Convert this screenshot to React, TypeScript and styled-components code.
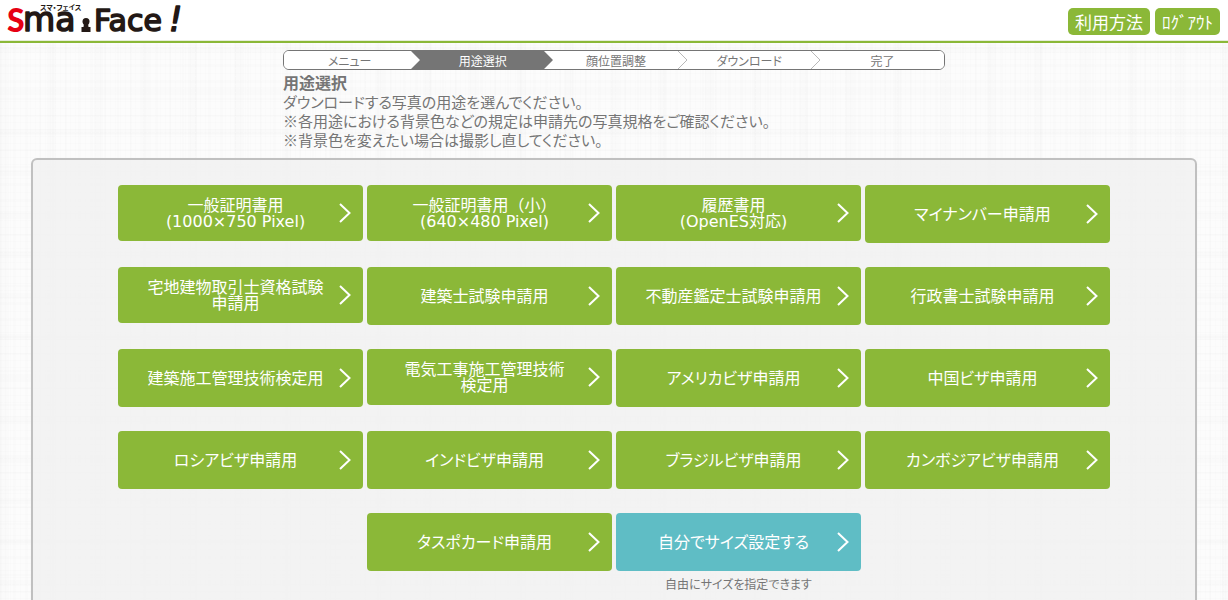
import React from "react";
import styled, { createGlobalStyle } from "styled-components";

const GREEN = "#8bb838";
const TEAL = "#5fbdc5";
const GREY = "#757575";

const GlobalStyle = createGlobalStyle`
  * { box-sizing: border-box; }
  body {
    margin: 0;
    min-height: 100vh;
    color: ${GREY};
    font-family: "Noto Sans CJK JP", sans-serif;
    font-size: 16px;
    font-weight: 400;
    font-feature-settings: "palt";
    background-color: #fcfcfc;
    background-image:
      repeating-linear-gradient(90deg, rgba(0,0,0,.008) 0 1px, transparent 1px 5px),
      repeating-linear-gradient(90deg, rgba(0,0,0,.008) 0 2px, transparent 2px 13px),
      repeating-linear-gradient(90deg, rgba(0,0,0,.008) 0 9px, transparent 9px 47px),
      repeating-linear-gradient(0deg, rgba(0,0,0,.008) 0 1px, transparent 1px 7px),
      repeating-linear-gradient(0deg, rgba(0,0,0,.008) 0 2px, transparent 2px 17px),
      repeating-linear-gradient(0deg, rgba(0,0,0,.008) 0 6px, transparent 6px 41px);
  }
`;

const Header = styled.header`
  display: flex;
  align-items: flex-start;
  justify-content: space-between;
  height: 43px;
  padding: 0 8px 0 7px;
  background: #fff;
  border-bottom: 2px solid ${GREEN};
  box-shadow: inset 0 -1px 0 #e6edda;
`;

const LogoLink = styled.a`
  display: block;
  height: 40px;
`;

const Nav = styled.nav`
  display: flex;
  gap: 5px;
  padding-top: 8px;
`;

const NavButton = styled.button`
  height: 27px;
  padding: 0 7px;
  border: 0;
  border-radius: 5px;
  background: ${GREEN};
  color: #fff;
  font: inherit;
  font-size: 17px;
  line-height: 27px;
  cursor: pointer;
`;

const Intro = styled.section`
  width: calc(100% - 32px);
  max-width: 662px;
  margin: 7px auto 0;
`;

const Steps = styled.ol`
  display: flex;
  height: 20px;
  margin: 0;
  padding: 0;
  list-style: none;
  overflow: hidden;
  background: #fff;
  border: 1px solid ${GREY};
  border-radius: 6px;
`;

const Step = styled.li<{ $active?: boolean }>`
  display: flex;
  flex: 1 1 auto;
  font-size: 12px;
  line-height: 20px;
  color: ${(p) => (p.$active ? "#fff" : GREY)};
  background: ${(p) => (p.$active ? GREY : "#fff")};

  &:first-child {
    padding-left: 4px;
  }
`;

const StepLabel = styled.span`
  flex: 1;
  min-width: 123px;
  text-align: center;
`;

const StepArrow = styled.svg`
  display: block;
  width: 10px;
  height: 18px;
`;

const Title = styled.h1`
  margin: 3px 0 0;
  font-size: 16px;
  font-weight: 700;
  line-height: 19px;
`;

const Lead = styled.p`
  margin: 0;
  font-size: 15px;
  line-height: 19px;
`;

const Panel = styled.main`
  width: 95%;
  margin: 9px auto 0;
  padding: 25px 16px 32px;
  border: 2px solid #c0c0c0;
  border-radius: 6px;
  background: rgba(241, 241, 241, 0.85);
`;

const Choices = styled.ul`
  display: flex;
  flex-wrap: wrap;
  justify-content: center;
  gap: 24px 4px;
  max-width: 1000px;
  margin: 0 auto;
  padding: 0;
  list-style: none;
`;

const Choice = styled.li`
  width: 245px;
  min-height: 58px;
`;

const ChoiceButton = styled.button<{ $twoLine: boolean; $accent?: boolean }>`
  display: flex;
  align-items: center;
  gap: 5px;
  width: 100%;
  height: ${(p) => (p.$twoLine ? 56 : 58)}px;
  padding: 0 12px 0 19px;
  border: 0;
  border-radius: 4px;
  background: ${(p) => (p.$accent ? TEAL : GREEN)};
  color: #fff;
  font-family: "DejaVu Sans", "Noto Sans CJK JP", sans-serif;
  font-size: 16px;
  font-weight: 400;
  font-feature-settings: ${(p) => (p.$twoLine ? "normal" : '"palt"')};
  line-height: 16px;
  cursor: pointer;
`;

const ChoiceLabel = styled.span`
  flex: 1;
  padding-top: 2px;
  text-align: center;
  white-space: pre;
`;

const Chevron = styled.svg`
  display: block;
  width: 12px;
  height: 20px;
  fill: none;
  stroke: #fff;
  stroke-width: 2;
`;

const Caption = styled.p`
  margin: 4px 0 0;
  font-size: 12px;
  line-height: 18px;
  text-align: center;
`;

const steps = ["メニュー", "用途選択", "顔位置調整", "ダウンロード", "完了"];
const activeStep = 1;

const choices: { label: string; accent?: boolean; caption?: string }[] = [
  { label: "一般証明書用\n(1000×750 Pixel)" },
  { label: "一般証明書用（小）\n(640×480 Pixel)" },
  { label: "履歴書用\n(OpenES対応)" },
  { label: "マイナンバー申請用" },
  { label: "宅地建物取引士資格試験\n申請用" },
  { label: "建築士試験申請用" },
  { label: "不動産鑑定士試験申請用" },
  { label: "行政書士試験申請用" },
  { label: "建築施工管理技術検定用" },
  { label: "電気工事施工管理技術\n検定用" },
  { label: "アメリカビザ申請用" },
  { label: "中国ビザ申請用" },
  { label: "ロシアビザ申請用" },
  { label: "インドビザ申請用" },
  { label: "ブラジルビザ申請用" },
  { label: "カンボジアビザ申請用" },
  { label: "タスポカード申請用" },
  { label: "自分でサイズ設定する", accent: true, caption: "自由にサイズを指定できます" },
];

function Logo() {
  return (
    <svg width="184" height="40" viewBox="0 0 184 40" role="img" aria-label="Sma Face!">
      <text x="0" y="32" fontSize="32" fontFamily="Lato, sans-serif" fontWeight="900" fill="#e60012">S</text>
      <g
        fontFamily="'DejaVu Sans', sans-serif"
        fontWeight="400"
        fill="#231815"
        stroke="#231815"
        strokeWidth="1.600"
        strokeLinejoin="round"
      >
        <text x="16" y="31" fontSize="33">ma</text>
        <text x="87" y="31" fontSize="30">Face</text>
        <text x="162" y="31" fontSize="33" fontStyle="italic">!</text>
      </g>
      <text x="33" y="10" fontSize="7" fontWeight="700" fill="#231815" fontFamily="'Noto Sans CJK JP', sans-serif">
        スマ・フェイス
      </text>
      <circle cx="79" cy="21.500" r="3.500" fill="#231815" />
      <path d="M77 23h4l.5 4h2v5h-9v-5h2z" fill="#231815" />
    </svg>
  );
}

function StepDivider({ index }: { index: number }) {
  if (index === activeStep) {
    return (
      <StepArrow viewBox="0 0 10 18" aria-hidden="true">
        <path d="M0 0H10V18H0L9 9z" fill="#fff" />
      </StepArrow>
    );
  }
  if (index === activeStep - 1) {
    return (
      <StepArrow viewBox="0 0 10 18" aria-hidden="true">
        <path d="M0 0H10V18H0L9 9z" fill={GREY} />
      </StepArrow>
    );
  }
  return (
    <StepArrow viewBox="0 0 10 18" aria-hidden="true">
      <path d="M0 0L9 9L0 18" fill="none" stroke="#b8b8b8" />
    </StepArrow>
  );
}

export default function App() {
  return (
    <>
      <GlobalStyle />
      <Header>
        <LogoLink href="#">
          <Logo />
        </LogoLink>
        <Nav>
          <NavButton type="button">利用方法</NavButton>
          <NavButton type="button">ﾛｸﾞｱｳﾄ</NavButton>
        </Nav>
      </Header>
      <Intro>
        <Steps>
          {steps.map((step, i) => (
            <Step key={step} $active={i === activeStep} aria-current={i === activeStep ? "step" : undefined}>
              <StepLabel>{step}</StepLabel>
              {i < steps.length - 1 && <StepDivider index={i} />}
            </Step>
          ))}
        </Steps>
        <Title>用途選択</Title>
        <Lead>ダウンロードする写真の用途を選んでください。</Lead>
        <Lead>※各用途における背景色などの規定は申請先の写真規格をご確認ください。</Lead>
        <Lead>※背景色を変えたい場合は撮影し直してください。</Lead>
      </Intro>
      <Panel>
        <Choices>
          {choices.map(({ label, accent, caption }) => (
            <Choice key={label}>
              <ChoiceButton type="button" $twoLine={label.includes("\n")} $accent={accent}>
                <ChoiceLabel>{label}</ChoiceLabel>
                <Chevron viewBox="0 0 12 20" aria-hidden="true">
                  <path d="M1 1l9.500 9L1 19" />
                </Chevron>
              </ChoiceButton>
              {caption && <Caption>{caption}</Caption>}
            </Choice>
          ))}
        </Choices>
      </Panel>
    </>
  );
}
